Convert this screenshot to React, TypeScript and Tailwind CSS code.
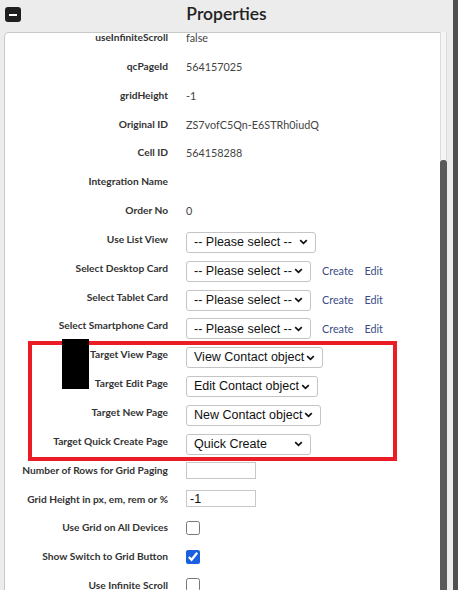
import { Fragment } from 'react';

type Row =
  | { label: string; kind: 'text'; value?: string }
  | { label: string; kind: 'select'; value: string; width: number; links?: boolean }
  | { label: string; kind: 'input'; value?: string }
  | { label: string; kind: 'check'; checked?: boolean };

const ROWS: Row[] = [
  { label: 'useInfiniteScroll', kind: 'text', value: 'false' },
  { label: 'qcPageId', kind: 'text', value: '564157025' },
  { label: 'gridHeight', kind: 'text', value: '-1' },
  { label: 'Original ID', kind: 'text', value: 'ZS7vofC5Qn-E6STRh0iudQ' },
  { label: 'Cell ID', kind: 'text', value: '564158288' },
  { label: 'Integration Name', kind: 'text' },
  { label: 'Order No', kind: 'text', value: '0' },
  { label: 'Use List View', kind: 'select', value: '-- Please select --', width: 130 },
  { label: 'Select Desktop Card', kind: 'select', value: '-- Please select --', width: 125, links: true },
  { label: 'Select Tablet Card', kind: 'select', value: '-- Please select --', width: 125, links: true },
  { label: 'Select Smartphone Card', kind: 'select', value: '-- Please select --', width: 125, links: true },
  { label: 'Target View Page', kind: 'select', value: 'View Contact object', width: 137 },
  { label: 'Target Edit Page', kind: 'select', value: 'Edit Contact object', width: 132 },
  { label: 'Target New Page', kind: 'select', value: 'New Contact object', width: 135 },
  { label: 'Target Quick Create Page', kind: 'select', value: 'Quick Create', width: 125 },
  { label: 'Number of Rows for Grid Paging', kind: 'input' },
  { label: 'Grid Height in px, em, rem or %', kind: 'input', value: '-1' },
  { label: 'Use Grid on All Devices', kind: 'check' },
  { label: 'Show Switch to Grid Button', kind: 'check', checked: true },
  { label: 'Use Infinite Scroll', kind: 'check' },
];

function Chevron() {
  return (
    <svg width="9" height="6" viewBox="0 0 9 6" className="shrink-0">
      <path d="M1.2 1.2l3.3 3.2 3.3-3.2" fill="none" stroke="#111" strokeWidth="1.7" />
    </svg>
  );
}

function FakeSelect({ value, width }: { value: string; width: number }) {
  return (
    <div
      className="flex h-[21px] items-center justify-between rounded-[3px] border border-[#c4c4c4] bg-white pl-[7px] pr-[7px] font-['Liberation_Sans',Arial,sans-serif] text-[12.5px] text-[#111]"
      style={{ width }}
    >
      <span className="whitespace-nowrap">{value}</span>
      <Chevron />
    </div>
  );
}

function Value({ row, first }: { row: Row; first: boolean }) {
  if (row.kind === 'text') {
    return (
      <div className={first ? 'leading-[9px] text-[#444]' : 'pt-[7px] leading-[15px] text-[#444]'}>
        {row.value}
      </div>
    );
  }
  if (row.kind === 'select') {
    return (
      <div className="flex items-center pt-[7px]">
        <FakeSelect value={row.value} width={row.width} />
        {row.links && (
          <div className="ml-[11px] flex gap-[11px] text-[#3b4c86]">
            <span>Create</span>
            <span>Edit</span>
          </div>
        )}
      </div>
    );
  }
  if (row.kind === 'input') {
    return (
      <div className="flex h-full items-center">
        <div className="flex h-[17px] w-[70px] items-center border border-[#c8c8c8] bg-white pl-[3px] font-['Liberation_Sans',Arial,sans-serif] text-[12.5px] text-[#111]">
          {row.value}
        </div>
      </div>
    );
  }
  return (
    <div className="flex h-full items-center">
      <input
        type="checkbox"
        readOnly
        checked={!!row.checked}
        className="m-0 h-[14px] w-[14px] accent-[#1a5fe0]"
      />
    </div>
  );
}

export default function App() {
  return (
    <div className="flex h-[590px] w-[458px] overflow-hidden bg-[#ececec] font-['Lato','Noto_Sans',sans-serif] text-[10.8px]">
      <div className="flex min-w-0 flex-1 flex-col">
        <div className="relative flex h-[32px] shrink-0 items-center justify-center">
          <div className="absolute left-[5px] top-[7px] flex h-[15px] w-[16px] items-center justify-center rounded-[3px] bg-[#1e1e1e]">
            <div className="h-[2px] w-[8px] bg-white" />
          </div>
          <h1 className="pb-[4px] text-[17.5px] font-semibold text-[#222]">Properties</h1>
        </div>
        <div className="flex min-h-0 flex-1 pr-[6px]">
          <div className="relative ml-[4px] min-w-0 flex-1 overflow-hidden rounded-tl-[5px] border-l border-t border-[#c9c9c9] bg-white">
            <div className="grid grid-cols-[163px_1fr] gap-x-[18px]">
              {ROWS.map((row, i) => (
                <Fragment key={row.label}>
                  <div
                    className={
                      i === 0
                        ? 'h-[18.85px] whitespace-nowrap text-right text-[10.2px] font-bold leading-[9px] text-[#333]'
                        : 'h-[28.85px] whitespace-nowrap pt-[7px] text-right text-[10.2px] font-bold leading-[15px] text-[#333]'
                    }
                  >
                    {row.label}
                  </div>
                  <div className={i === 0 ? 'h-[18.85px]' : 'h-[28.85px]'}>
                    <Value row={row} first={i === 0} />
                  </div>
                </Fragment>
              ))}
            </div>
            <div className="absolute left-[23px] top-[308px] h-[120px] w-[369px] border-[4px] border-[#ea1c26]" />
            <div className="absolute left-[57px] top-[306px] h-[50px] w-[27px] bg-black" />
          </div>
          <div className="flex w-[7px] flex-col">
            <div className="h-[128px] border-x border-[#dcdcdc] bg-[#f4f4f4]" />
            <div className="flex-1 rounded-t-[3px] bg-[#5a5a5a]" />
          </div>
        </div>
      </div>
      <div className="w-[5px] bg-[#4f4f4f]" />
    </div>
  );
}
